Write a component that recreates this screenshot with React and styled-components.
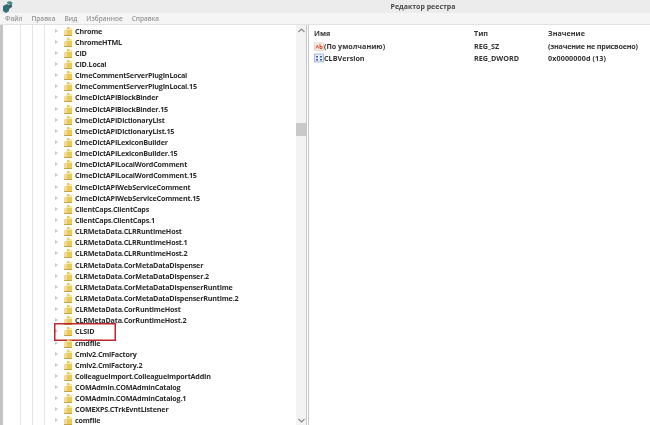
import React from 'react';
import styled, { createGlobalStyle } from 'styled-components';

const Global = createGlobalStyle`
  html, body {
    margin: 0;
    padding: 0;
    background: #fff;
  }
`;

const Window = styled.div`
  width: 650px;
  height: 425px;
  display: flex;
  flex-direction: column;
  overflow: hidden;
  font-family: "Open Sans", "Liberation Sans", sans-serif;
  color: #2c2c2c;
  filter: blur(0.45px);
`;

const TitleBar = styled.div`
  height: 13px;
  flex: none;
  display: flex;
  align-items: center;
  padding-left: 3px;
  background: #ececec;
`;

const Title = styled.div`
  flex: 1;
  text-align: center;
  padding-left: 183px;
  font-size: 7px;
  font-weight: 700;
  color: #4a4a4a;
`;

const MenuBar = styled.div`
  height: 11px;
  flex: none;
  display: flex;
  align-items: center;
  gap: 9px;
  padding: 0 0 0 5px;
  background: #f5f5f5;
  border-bottom: 1px solid #e2e2e2;
`;

const MenuItem = styled.span`
  font-size: 6.5px;
  font-weight: 600;
  color: #959595;
`;

const Body = styled.div`
  flex: 1;
  min-height: 0;
  display: flex;
`;

const TreePane = styled.div`
  width: 306px;
  flex: none;
  display: flex;
  border-left: 3px solid #c4c4c4;
  box-sizing: border-box;
`;

const Tree = styled.div`
  flex: 1;
  min-width: 0;
  background:
    linear-gradient(#e4e4e4, #e4e4e4) 17px 0 / 1px 100% no-repeat,
    linear-gradient(#e4e4e4, #e4e4e4) 29px 0 / 1px 100% no-repeat,
    linear-gradient(#e4e4e4, #e4e4e4) 41px 0 / 1px 100% no-repeat;
`;

const Row = styled.div`
  position: relative;
  height: 11.15px;
  display: flex;
  align-items: center;
  padding-left: 52px;
  white-space: nowrap;
`;

const Expander = styled.span`
  width: 0;
  height: 0;
  flex: none;
  border-left: 3px solid #c8c8c8;
  border-top: 2.5px solid transparent;
  border-bottom: 2.5px solid transparent;
  margin-right: 4px;
`;

const Label = styled.span`
  margin-left: 3px;
  font-size: 7.2px;
  font-weight: 700;
  letter-spacing: -0.2px;
  color: #2a2a2a;
`;

const Highlight = styled.div`
  position: absolute;
  left: 51px;
  top: -3px;
  width: 60px;
  height: 16px;
  border: 1px solid #c0272d;
  box-shadow: inset 0 0 0 0.5px #c0272d;
`;

const Scrollbar = styled.div`
  width: 10px;
  flex: none;
  display: flex;
  flex-direction: column;
  align-items: center;
  justify-content: space-between;
  padding: 3px 0 2px;
  background: #f3f3f3;
  position: relative;
`;

const Thumb = styled.div`
  position: absolute;
  left: 0;
  top: 98px;
  width: 10px;
  height: 13px;
  background: #c9c9c9;
`;

const Arrow = styled.svg`
  width: 7px;
  height: 5px;
  display: block;
`;

const Splitter = styled.div`
  width: 3px;
  flex: none;
  background: #fff;
  border-left: 1px solid #c6c6c6;
  border-right: 1px solid #c6c6c6;
  box-sizing: border-box;
`;

const ValuesPane = styled.div`
  flex: 1;
  min-width: 0;
  padding: 0 0 0 5px;
`;

const ValueRow = styled.div`
  display: grid;
  grid-template-columns: 160px 74px 1fr;
  align-items: center;
  height: ${p => (p.$head ? 15 : 12)}px;
  font-size: 7.2px;
  font-weight: 700;
  color: #333;
  white-space: nowrap;
`;

const NameCell = styled.span`
  display: flex;
  align-items: center;
  gap: 0;
`;

const DataCell = styled.span`
  letter-spacing: ${p => (p.$tight ? '-0.2px' : '0.1px')};
`;

const Folder = () => (
  <svg width="10" height="10" viewBox="0 0 10 10" style={{ flex: 'none' }}>
    <path d="M5 1h2.5v1.5H10V10H5z" fill="#e9c85e" />
    <path d="M2 4.5 5 3v7H2z" fill="#f3dc8c" />
    <path d="M5 3h5v1H5z" fill="#f7e7a8" />
    <path d="M2 9h8v1H2z" fill="#c9a53e" />
  </svg>
);

const AppIcon = () => (
  <svg width="10" height="12" viewBox="0 0 10 12">
    <path d="M0 5l4-2 2 1v6l-3 2-3-2z" fill="#2f6f75" />
    <path d="M4 1l3-1 3 2-3 2-3-2z" fill="#3f8c8f" />
    <path d="M6 4l3-1v3L6 8z" fill="#4a5a5c" />
  </svg>
);

const StringIcon = () => (
  <svg width="10" height="10" viewBox="0 0 10 10" style={{ flex: 'none' }}>
    <rect x="0.5" y="2" width="9" height="7.5" fill="#fbeee6" stroke="#d8c2b4" strokeWidth="0.6" />
    <path d="M2 7.5 3.4 4l1.2 3.5M6 3v4.5h2V5.5H6" fill="none" stroke="#d4502a" strokeWidth="1" />
  </svg>
);

const DwordIcon = () => (
  <svg width="10" height="10" viewBox="0 0 10 10" style={{ flex: 'none' }}>
    <rect x="0.5" y="1" width="9" height="8" fill="#e6ecf8" stroke="#7e93c4" strokeWidth="0.6" />
    <path d="M2 3h2v1.6H2zM6 3h2v1.6H6zM2 6h2v1.6H2zM6 6h2v1.6H6z" fill="#3f5fa8" />
  </svg>
);

const keys = [
  'Chrome',
  'ChromeHTML',
  'CID',
  'CID.Local',
  'ClmeCommentServerPlugInLocal',
  'ClmeCommentServerPlugInLocal.15',
  'ClmeDictAPIBlockBinder',
  'ClmeDictAPIBlockBinder.15',
  'ClmeDictAPIDictionaryList',
  'ClmeDictAPIDictionaryList.15',
  'ClmeDictAPILexiconBuilder',
  'ClmeDictAPILexiconBuilder.15',
  'ClmeDictAPILocalWordComment',
  'ClmeDictAPILocalWordComment.15',
  'ClmeDictAPIWebServiceComment',
  'ClmeDictAPIWebServiceComment.15',
  'ClientCaps.ClientCaps',
  'ClientCaps.ClientCaps.1',
  'CLRMetaData.CLRRuntimeHost',
  'CLRMetaData.CLRRuntimeHost.1',
  'CLRMetaData.CLRRuntimeHost.2',
  'CLRMetaData.CorMetaDataDispenser',
  'CLRMetaData.CorMetaDataDispenser.2',
  'CLRMetaData.CorMetaDataDispenserRuntime',
  'CLRMetaData.CorMetaDataDispenserRuntime.2',
  'CLRMetaData.CorRuntimeHost',
  'CLRMetaData.CorRuntimeHost.2',
  'CLSID',
  'cmdfile',
  'Cmiv2.CmiFactory',
  'Cmiv2.CmiFactory.2',
  'ColleagueImport.ColleagueImportAddIn',
  'COMAdmin.COMAdminCatalog',
  'COMAdmin.COMAdminCatalog.1',
  'COMEXPS.CTrkEvntListener',
  'comfile',
];

const menus = ['Файл', 'Правка', 'Вид', 'Избранное', 'Справка'];

export default function App() {
  return (
    <Window>
      <Global />
      <TitleBar>
        <AppIcon />
        <Title>Редактор реестра</Title>
      </TitleBar>
      <MenuBar>
        {menus.map(m => <MenuItem key={m}>{m}</MenuItem>)}
      </MenuBar>
      <Body>
        <TreePane>
          <Tree>
            {keys.map(k => (
              <Row key={k}>
                <Expander />
                <Folder />
                <Label>{k}</Label>
                {k === 'CLSID' && <Highlight />}
              </Row>
            ))}
          </Tree>
          <Scrollbar>
            <Arrow viewBox="0 0 7 5"><path d="M0.5 4 3.5 1l3 3" fill="none" stroke="#8a8a8a" strokeWidth="1.2" /></Arrow>
            <Thumb />
            <Arrow viewBox="0 0 7 5"><path d="M0.5 1l3 3 3-3" fill="none" stroke="#8a8a8a" strokeWidth="1.2" /></Arrow>
          </Scrollbar>
        </TreePane>
        <Splitter />
        <ValuesPane>
          <ValueRow $head>
            <span>Имя</span>
            <span>Тип</span>
            <span>Значение</span>
          </ValueRow>
          <ValueRow>
            <NameCell><StringIcon />(По умолчанию)</NameCell>
            <span>REG_SZ</span>
            <DataCell $tight>(значение не присвоено)</DataCell>
          </ValueRow>
          <ValueRow>
            <NameCell><DwordIcon />CLBVersion</NameCell>
            <span>REG_DWORD</span>
            <DataCell>0x0000000d (13)</DataCell>
          </ValueRow>
        </ValuesPane>
      </Body>
    </Window>
  );
}
